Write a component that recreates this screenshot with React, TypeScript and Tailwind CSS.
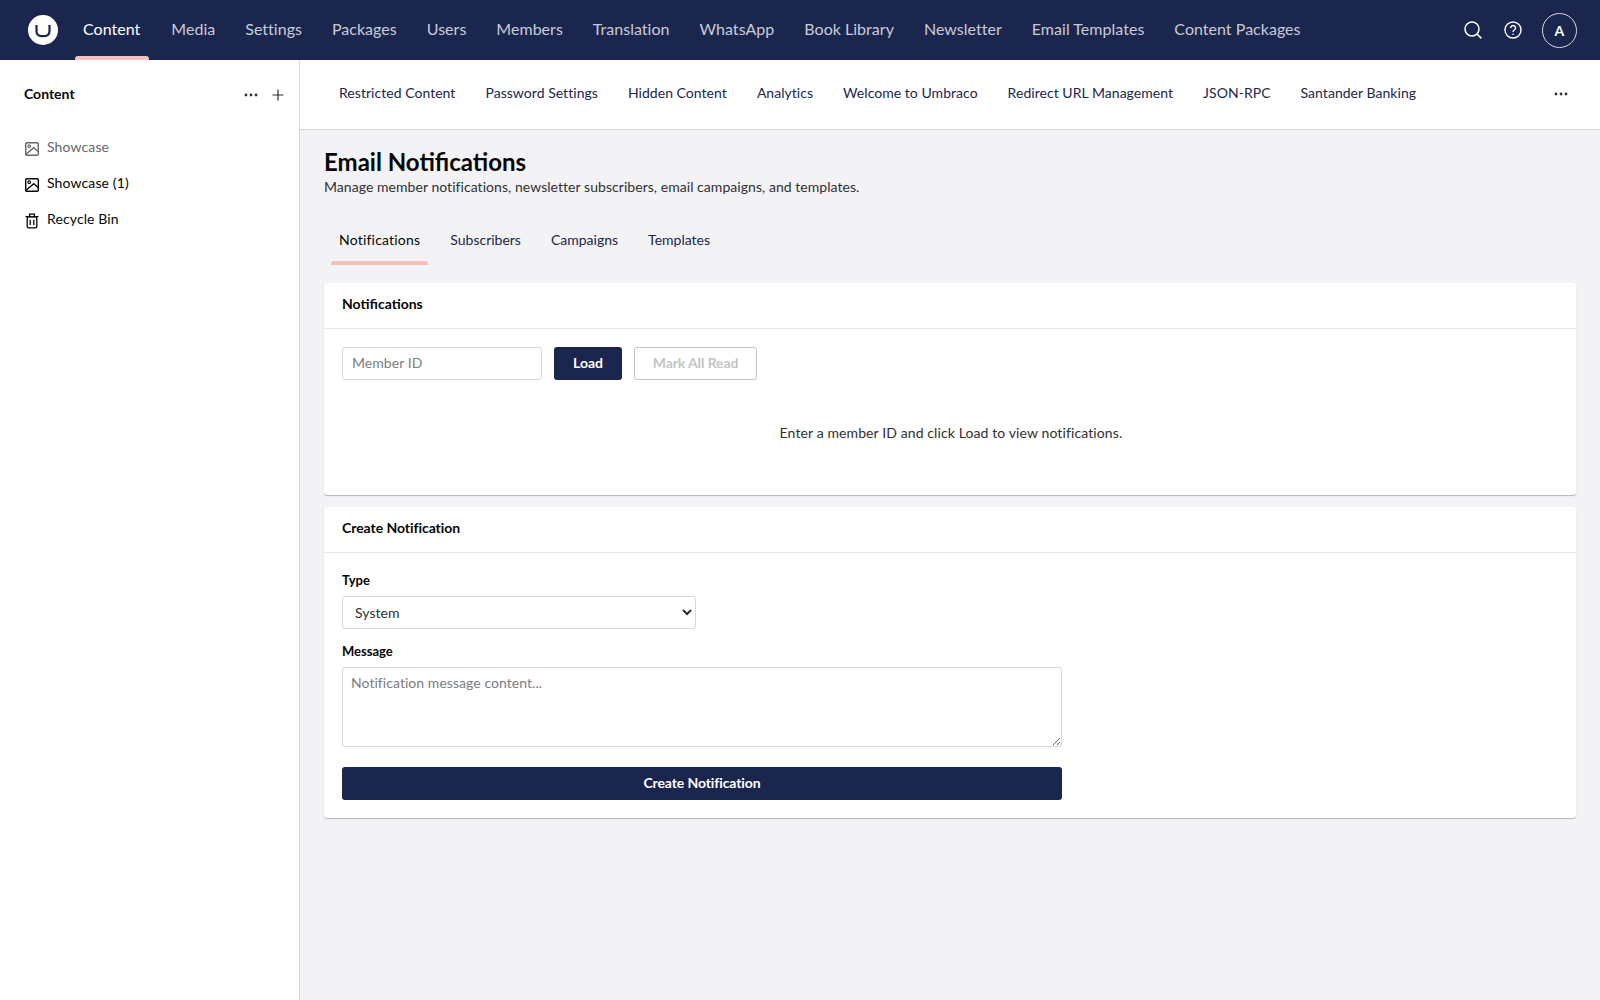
import React from "react";

const NAV = ["Media", "Settings", "Packages", "Users", "Members", "Translation", "WhatsApp", "Book Library", "Newsletter", "Email Templates", "Content Packages"];
const SUBNAV = ["Restricted Content", "Password Settings", "Hidden Content", "Analytics", "Welcome to Umbraco", "Redirect URL Management", "JSON-RPC", "Santander Banking"];
const TABS = ["Subscribers", "Campaigns", "Templates"];

function Dots({ className }: { className?: string }) {
  return (
    <svg width="14" height="4" viewBox="0 0 14 4" className={className} fill="currentColor">
      <circle cx="2" cy="2" r="1.4" />
      <circle cx="7" cy="2" r="1.4" />
      <circle cx="12" cy="2" r="1.4" />
    </svg>
  );
}

function PictureIcon({ className }: { className?: string }) {
  return (
    <svg width="16" height="16" viewBox="0 0 16 16" fill="none" stroke="currentColor" strokeWidth="1.4" className={className}>
      <rect x="1.7" y="1.7" width="12.6" height="12.6" rx="1" />
      <circle cx="5.2" cy="5.2" r="1.3" strokeWidth="1.1" />
      <path d="M2 13.2 9.8 6.6l4.2 4" />
    </svg>
  );
}

function TrashIcon() {
  return (
    <svg width="16" height="16" viewBox="0 0 16 16" fill="none" stroke="currentColor" strokeWidth="1.3">
      <path d="M1.5 3.6h13M5.6 3.4V1.2h4.8v2.2" />
      <rect x="3.2" y="3.8" width="9.6" height="11" rx="1.2" />
      <path d="M6.2 6.8v5.2M9.8 6.8v5.2" />
    </svg>
  );
}

export default function App() {
  return (
    <div className="flex h-[1000px] w-[1600px] flex-col overflow-hidden bg-[#f3f3f5] font-['Lato','Noto_Sans',sans-serif] text-[14px] tracking-[0.05px] text-[#1b264f]">
      <header className="flex h-[60px] shrink-0 items-center bg-[#1b264f] pr-[23px]">
        <div className="ml-[28px] mr-[10px] flex h-[30px] w-[30px] items-center justify-center rounded-full bg-white">
          <svg width="30" height="30" viewBox="0 0 30 30" fill="none">
            <path d="M8.5 10v6.2c0 3.6 2.4 5 6.5 5s6.5-1.4 6.5-5V10" stroke="#1b264f" strokeWidth="2.2" />
          </svg>
        </div>
        <nav className="flex h-full flex-1 items-stretch text-[16px] tracking-[0.025px]">
          <a className="relative flex items-center pb-[2px] pl-[15px] pr-[16px] text-white">
            Content
            <span className="absolute bottom-0 left-[7px] right-[7px] h-[4px] rounded-t-[3px] bg-[#f5c1bc]" />
          </a>
          {NAV.map((n) => (
            <a key={n} className="flex items-center px-[15px] pb-[2px] text-[#c9cbd5]">{n}</a>
          ))}
        </nav>
        <div className="flex items-center text-white">
          <svg width="20" height="20" viewBox="0 0 20 20" fill="none" stroke="currentColor" strokeWidth="1.5" className="mr-[20px]">
            <circle cx="9" cy="9" r="7" />
            <path d="m14 14 4.4 4.4" />
          </svg>
          <svg width="20" height="20" viewBox="0 0 20 20" fill="none" stroke="currentColor" strokeWidth="1.4" className="mr-[19px]">
            <circle cx="10" cy="10" r="8" />
            <path d="M7.7 7.9a2.4 2.4 0 1 1 3.6 2.1c-.8.5-1.3 1-1.3 1.9" />
            <circle cx="10" cy="14.3" r=".8" fill="currentColor" stroke="none" />
          </svg>
          <div className="flex h-[35px] w-[35px] items-center justify-center rounded-full border border-[#d8d8dc] text-[14px] font-bold">A</div>
        </div>
      </header>

      <div className="flex min-h-0 flex-1">
        <aside className="w-[300px] shrink-0 border-r border-[#d8d7d9] bg-white">
          <div className="flex h-[70px] items-center pl-[24px] pr-[15px]">
            <span className="-mt-[4px] flex-1 text-[14px] font-bold tracking-normal text-[#060606]">Content</span>
            <Dots className="mr-[14px] text-[#303033]" />
            <svg width="12" height="12" viewBox="0 0 12 12" stroke="#303033" strokeWidth="1.2"><path d="M6 .5v11M.5 6h11" /></svg>
          </div>
          <ul className="mt-[1px] flex flex-col text-[14px] tracking-[0.12px]">
            <li className="flex h-[36px] items-center gap-[7px] pl-[24px] text-[#68676b]">
              <PictureIcon />
              <span className="-mt-[6px]">Showcase</span>
            </li>
            <li className="flex h-[36px] items-center gap-[7px] pl-[24px] text-[#060606]">
              <PictureIcon />
              <span className="-mt-[6px]">Showcase (1)</span>
            </li>
            <li className="flex h-[36px] items-center gap-[7px] pl-[24px] text-[#060606]">
              <TrashIcon />
              <span className="-mt-[6px]">Recycle Bin</span>
            </li>
          </ul>
        </aside>

        <main className="flex min-w-0 flex-1 flex-col">
          <div className="flex h-[70px] shrink-0 items-center border-b border-[#d8d7d9] bg-white pl-[24px] pr-[32px]">
            <div className="flex flex-1 gap-[30px] pl-[15px] tracking-[0.04px]">
              {SUBNAV.map((s) => (
                <a key={s} className="-mt-[5px]">{s}</a>
              ))}
            </div>
            <Dots className="-mt-[1px] text-[#303033]" />
          </div>

          <div className="flex flex-col px-[24px] pt-[17px]">
            <h1 className="text-[24px] font-bold leading-[29px] tracking-normal text-[#060606]">Email Notifications</h1>
            <p className="mt-[2px] text-[14px] leading-[18px] text-[#303033]">
              Manage member notifications, newsletter subscribers, email campaigns, and templates.
            </p>

            <div className="mt-[19px] flex h-[50px] tracking-normal">
              <a className="relative flex items-start px-[15px] pt-[14px] tracking-[0.2px] text-[#060606]">
                Notifications
                <span className="absolute bottom-0 left-[7px] right-[7px] h-[4px] rounded-t-[3px] bg-[#f5c1bc]" />
              </a>
              {TABS.map((t) => (
                <a key={t} className="flex items-start px-[15px] pt-[14px]">{t}</a>
              ))}
            </div>

            <section className="mt-[18px] flex flex-col rounded-[3px] bg-white shadow-[0_1px_1px_rgba(0,0,0,0.25)]">
              <h2 className="flex h-[46px] items-center border-b border-[#e9e9eb] px-[18px] pb-[4px] text-[14px] font-bold tracking-normal text-[#060606]">Notifications</h2>
              <div className="flex h-[166px] flex-col px-[18px] pt-[18px]">
                <div className="flex items-center">
                  <input placeholder="Member ID" className="h-[33px] w-[200px] rounded-[3px] border border-[#d8d7d9] bg-white pb-[2px] pl-[9px] pr-[10px] text-[14px] placeholder:text-[#7d7d85] outline-none" />
                  <button className="ml-[12px] h-[33px] w-[68px] rounded-[3px] bg-[#1b264f] pb-[2px] text-[14px] font-bold tracking-normal text-white">Load</button>
                  <button disabled className="ml-[12px] h-[33px] w-[123px] rounded-[3px] border border-[#c4c4c4] bg-white pb-[2px] text-[14px] font-bold tracking-[-0.1px] text-[#c4c4c4]">Mark All Read</button>
                </div>
                <p className="mt-[43px] pl-[2px] text-center text-[14px] leading-[20px] tracking-[0.11px] text-[#303033]">Enter a member ID and click Load to view notifications.</p>
              </div>
            </section>

            <section className="mt-[12px] flex flex-col rounded-[3px] bg-white shadow-[0_1px_1px_rgba(0,0,0,0.25)]">
              <h2 className="flex h-[46px] items-center border-b border-[#e9e9eb] px-[18px] pb-[4px] text-[14px] font-bold tracking-[-0.05px] text-[#060606]">Create Notification</h2>
              <div className="flex flex-col p-[18px]">
                <label className="h-[25px] text-[13px] font-bold leading-[18px] tracking-normal text-[#060606]">Type</label>
                <select defaultValue="System" className="h-[33px] w-[354px] rounded-[3px] border border-[#d8d7d9] bg-white px-[8px] pb-[1px] text-[14px] text-[#303033] outline-none">
                  <option>System</option>
                </select>
                <label className="mt-[13px] h-[25px] text-[13px] font-bold leading-[18px] tracking-normal text-[#060606]">Message</label>
                <textarea placeholder="Notification message content..." className="block h-[80px] w-[720px] rounded-[3px] border border-[#d8d7d9] bg-white px-[8px] py-[4px] text-[14px] placeholder:text-[#7d7d85] outline-none" />
                <button className="mt-[20px] h-[33px] w-[720px] rounded-[3px] bg-[#1b264f] pb-[3px] text-[14px] font-bold tracking-[-0.1px] text-white">Create Notification</button>
              </div>
            </section>
          </div>
        </main>
      </div>
    </div>
  );
}
